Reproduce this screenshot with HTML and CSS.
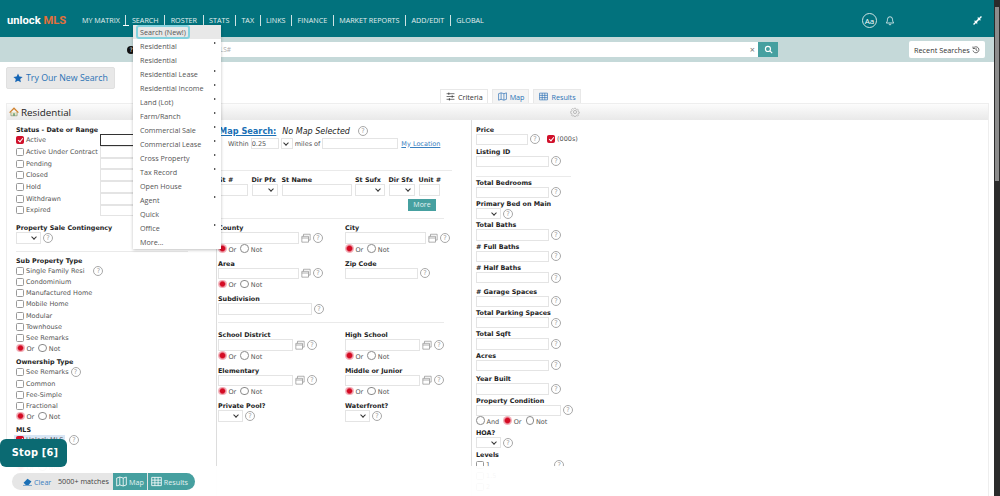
FILE: index.html
```html
<!DOCTYPE html>
<html>
    <head>
        <meta charset="UTF-8">
        <title>Search</title>
        <link rel="stylesheet" href="styles.css">
    </head>
    <body>
        <div class="mls-app">
            <div class="mls-main">
                <div class="mls-topbar">
                    <div class="mls-logo">unlock <span>MLS</span></div>
                    <ul class="mls-nav">
                        <li>MY MATRIX</li>
                        <li class="is-open">SEARCH</li>
                        <li>ROSTER</li>
                        <li>STATS</li>
                        <li>TAX</li>
                        <li>LINKS</li>
                        <li>FINANCE</li>
                        <li>MARKET REPORTS</li>
                        <li>ADD/EDIT</li>
                        <li>GLOBAL</li>
                    </ul>
                    <div class="mls-aa">Aa</div>
                    <svg class="mls-bell" viewBox="0 0 16 16"><path d="M8 2a4 4 0 0 0-4 4c0 4-1.500 5-2 6h12c-.5-1-2-2-2-6a4 4 0 0 0-4-4zM6.500 13.500a1.500 1.500 0 0 0 3 0" fill="none" stroke="#fff" stroke-width="1.200"/></svg>
                    <svg class="mls-compress" viewBox="0 0 16 16"><path d="M1 15L15 1" stroke="#fff" stroke-width="2.400"/><path d="M8.500 1.500v6h6zM7.500 14.500v-6h-6z" fill="#fff"/></svg>
                </div>
                <div class="mls-searchbar">
                    <div class="mls-qmark">?</div>
                    <div class="mls-searchbox">
                        <span>MLS#</span>
                        <b>×</b>
                    </div>
                    <div class="mls-searchbtn">
                        <svg viewBox="0 0 16 16"><circle cx="7" cy="7" r="4.500" fill="none" stroke="#fff" stroke-width="2"/><path d="M10.500 10.500L14.500 14.500" stroke="#fff" stroke-width="2"/></svg>
                    </div>
                    <div class="mls-recent">
                        Recent Searches
                        <svg viewBox="0 0 16 16"><path d="M3 4a6 6 0 1 1-1 5M2 1v4h4M8 4v4l3 2" fill="none" stroke="#444" stroke-width="1.500"/></svg>
                    </div>
                </div>

                <div class="mls-try">
                    <svg viewBox="0 0 16 16"><path d="M8 .8l2.200 4.800 5.200.6-3.900 3.500 1.100 5.200L8 12.300l-4.600 2.600 1.100-5.200L.6 6.200l5.200-.6z" fill="#1565b5"/></svg>
                    Try Our New Search
                </div>

                <div class="mls-tabs">
                    <div class="mls-tab is-active">
                        <svg viewBox="0 0 16 16"><path d="M1 3h14M1 8h14M1 13h14" stroke="#333" stroke-width="1.200"/><path d="M5 1v4M11 6v4M6 11v4" stroke="#333" stroke-width="1.500"/></svg>
                        Criteria
                    </div>
                    <div class="mls-tab">
                        <svg viewBox="0 0 16 16"><path d="M1 3l4.500-1.500 5 1.500L15 1.500V13l-4.500 1.500-5-1.500L1 14.500zM5.500 1.500V13M10.500 3v11.500" fill="none" stroke="#2a6fb5" stroke-width="1.200"/></svg>
                        Map
                    </div>
                    <div class="mls-tab">
                        <svg viewBox="0 0 16 16"><path d="M1 2h14v12H1zM1 6h14M1 10h14M5.700 2v12M10.300 2v12" fill="none" stroke="#2a6fb5" stroke-width="1.200"/></svg>
                        Results
                    </div>
                </div>

                <div class="mls-panel">
                    <div class="mls-panel-head">
                        <svg class="mls-house" viewBox="0 0 16 16"><path d="M3 8v6h10V8" fill="#e9e2c6" stroke="#7f8f6a"/><path d="M1 9l7-7 7 7" fill="none" stroke="#d0812c" stroke-width="2"/><path d="M7 10h2v4H7z" fill="#3c8a5c"/></svg>
                        <h3>Residential</h3>
                        <svg class="mls-gear" viewBox="0 0 16 16"><circle cx="8" cy="8" r="2.500" fill="none" stroke="#999"/><path d="M6.800 1h2.400l.4 2 1.500.7 1.800-1.100 1.600 1.700-1.100 1.700.6 1.500 2 .4v2.400l-2 .4-.6 1.500 1.100 1.700-1.600 1.700-1.800-1.100-1.500.7-.4 1.800H6.800l-.4-1.800-1.500-.7-1.800 1.100-1.600-1.700 1.100-1.700-.6-1.500-2-.4V6.900l2-.4.600-1.500-1.100-1.700 1.600-1.700 1.800 1.100 1.500-.7z" transform="translate(1.100 1.100) scale(.86)" fill="none" stroke="#999"/></svg>
                    </div>
                    <div class="mls-columns">
                        <div class="mls-col-left">
                            <div class="mls-label">Status - Date or Range</div>
                            <div class="mls-status"><label><input class="mls-cb" type="checkbox" checked>Active</label><input class="mls-input is-focus"></div>
                            <div class="mls-status"><label><input class="mls-cb" type="checkbox">Active Under Contract</label><input class="mls-input"></div>
                            <div class="mls-status"><label><input class="mls-cb" type="checkbox">Pending</label><input class="mls-input"></div>
                            <div class="mls-status"><label><input class="mls-cb" type="checkbox">Closed</label><input class="mls-input"></div>
                            <div class="mls-status"><label><input class="mls-cb" type="checkbox">Hold</label><input class="mls-input"></div>
                            <div class="mls-status"><label><input class="mls-cb" type="checkbox">Withdrawn</label><input class="mls-input"></div>
                            <div class="mls-status"><label><input class="mls-cb" type="checkbox">Expired</label><input class="mls-input"></div>

                            <div class="mls-label mls-contingency">Property Sale Contingency</div>
                            <div class="mls-row"><div class="mls-select"></div><span class="mls-help">?</span></div>
                            <hr class="mls-rule mls-rule-left">

                            <div class="mls-label">Sub Property Type</div>
                            <div class="mls-check"><input class="mls-cb" type="checkbox">Single Family Resi<span class="mls-help mls-help-far">?</span></div>
                            <div class="mls-check"><input class="mls-cb" type="checkbox">Condominium</div>
                            <div class="mls-check"><input class="mls-cb" type="checkbox">Manufactured Home</div>
                            <div class="mls-check"><input class="mls-cb" type="checkbox">Mobile Home</div>
                            <div class="mls-check"><input class="mls-cb" type="checkbox">Modular</div>
                            <div class="mls-check"><input class="mls-cb" type="checkbox">Townhouse</div>
                            <div class="mls-check"><input class="mls-cb" type="checkbox">See Remarks</div>
                            <div class="mls-radios"><input class="mls-radio" type="radio" name="r1" checked>Or<input class="mls-radio" type="radio" name="r1">Not</div>

                            <div class="mls-label mls-ownership">Ownership Type</div>
                            <div class="mls-check"><input class="mls-cb" type="checkbox">See Remarks<span class="mls-help">?</span></div>
                            <div class="mls-check"><input class="mls-cb" type="checkbox">Common</div>
                            <div class="mls-check"><input class="mls-cb" type="checkbox">Fee-Simple</div>
                            <div class="mls-check"><input class="mls-cb" type="checkbox">Fractional</div>
                            <div class="mls-radios"><input class="mls-radio" type="radio" name="r2" checked>Or<input class="mls-radio" type="radio" name="r2">Not</div>

                            <div class="mls-label mls-mls">MLS</div>
                            <div class="mls-check"><span class="mls-picked"><input class="mls-cb" type="checkbox" checked>Unlock MLS</span><span class="mls-help">?</span></div>
                            <div class="mls-radios mls-mls-or"><input class="mls-radio" type="radio" name="r3" checked>Or<input class="mls-radio" type="radio" name="r3">Not</div>
                        </div>

                        <div class="mls-col-mid">
                            <div class="mls-map-line">
                                <a href="#">Map Search:</a>
                                <em>No Map Selected</em>
                                <span class="mls-help">?</span>
                            </div>
                            <div class="mls-within">
                                Within
                                <input class="mls-input mls-w-radius" value="0.25">
                                <div class="mls-select mls-w-unit"></div>
                                miles of
                                <input class="mls-input mls-w-place">
                                <a href="#">My Location</a>
                            </div>
                            <hr class="mls-rule mls-rule-addr">

                            <div class="mls-address">
                                <div><div class="mls-label">St #</div><input class="mls-input mls-w-stno"></div>
                                <div><div class="mls-label">Dir Pfx</div><div class="mls-select mls-w-dir"></div></div>
                                <div><div class="mls-label">St Name</div><input class="mls-input mls-w-stname"></div>
                                <div><div class="mls-label">St Sufx</div><div class="mls-select mls-w-sufx"></div></div>
                                <div><div class="mls-label">Dir Sfx</div><div class="mls-select mls-w-dir"></div></div>
                                <div><div class="mls-label">Unit #</div><input class="mls-input mls-w-unitno"></div>
                            </div>
                            <div class="mls-more">More</div>
                            <hr class="mls-rule mls-rule-mid">

                            <div class="mls-pair">
                                <div>
                                    <div class="mls-label">County</div>
                                    <div class="mls-row"><input class="mls-input mls-w-81"><svg class="mls-stack" viewBox="0 0 12 12"><use href="#stack"/></svg><span class="mls-help">?</span></div>
                                    <div class="mls-radios"><input class="mls-radio" type="radio" name="r4" checked>Or<input class="mls-radio" type="radio" name="r4">Not</div>
                                </div>
                                <div>
                                    <div class="mls-label">City</div>
                                    <div class="mls-row"><input class="mls-input mls-w-81"><svg class="mls-stack" viewBox="0 0 12 12"><use href="#stack"/></svg><span class="mls-help">?</span></div>
                                    <div class="mls-radios"><input class="mls-radio" type="radio" name="r5" checked>Or<input class="mls-radio" type="radio" name="r5">Not</div>
                                </div>
                                <div>
                                    <div class="mls-label">Area</div>
                                    <div class="mls-row"><input class="mls-input mls-w-81"><svg class="mls-stack" viewBox="0 0 12 12"><use href="#stack"/></svg><span class="mls-help">?</span></div>
                                    <div class="mls-radios"><input class="mls-radio" type="radio" name="r6" checked>Or<input class="mls-radio" type="radio" name="r6">Not</div>
                                </div>
                                <div>
                                    <div class="mls-label">Zip Code</div>
                                    <div class="mls-row"><input class="mls-input mls-w-73"><span class="mls-help">?</span></div>
                                </div>
                                <div class="mls-span">
                                    <div class="mls-label">Subdivision</div>
                                    <div class="mls-row"><input class="mls-input mls-w-94"><span class="mls-help">?</span></div>
                                </div>
                            </div>
                            <hr class="mls-rule mls-rule-school">

                            <div class="mls-pair">
                                <div>
                                    <div class="mls-label">School District</div>
                                    <div class="mls-row"><input class="mls-input mls-w-75"><svg class="mls-stack" viewBox="0 0 12 12"><use href="#stack"/></svg><span class="mls-help">?</span></div>
                                    <div class="mls-radios"><input class="mls-radio" type="radio" name="r7" checked>Or<input class="mls-radio" type="radio" name="r7">Not</div>
                                </div>
                                <div>
                                    <div class="mls-label">High School</div>
                                    <div class="mls-row"><input class="mls-input mls-w-75"><svg class="mls-stack" viewBox="0 0 12 12"><use href="#stack"/></svg><span class="mls-help">?</span></div>
                                    <div class="mls-radios"><input class="mls-radio" type="radio" name="r8" checked>Or<input class="mls-radio" type="radio" name="r8">Not</div>
                                </div>
                                <div>
                                    <div class="mls-label">Elementary</div>
                                    <div class="mls-row"><input class="mls-input mls-w-75"><svg class="mls-stack" viewBox="0 0 12 12"><use href="#stack"/></svg><span class="mls-help">?</span></div>
                                    <div class="mls-radios"><input class="mls-radio" type="radio" name="r9" checked>Or<input class="mls-radio" type="radio" name="r9">Not</div>
                                </div>
                                <div>
                                    <div class="mls-label">Middle or Junior</div>
                                    <div class="mls-row"><input class="mls-input mls-w-75"><svg class="mls-stack" viewBox="0 0 12 12"><use href="#stack"/></svg><span class="mls-help">?</span></div>
                                    <div class="mls-radios"><input class="mls-radio" type="radio" name="r10" checked>Or<input class="mls-radio" type="radio" name="r10">Not</div>
                                </div>
                                <div>
                                    <div class="mls-label">Private Pool?</div>
                                    <div class="mls-row"><div class="mls-select"></div><span class="mls-help">?</span></div>
                                </div>
                                <div>
                                    <div class="mls-label">Waterfront?</div>
                                    <div class="mls-row"><div class="mls-select"></div><span class="mls-help">?</span></div>
                                </div>
                            </div>
                        </div>

                        <div class="mls-col-right">
                            <div class="mls-field is-first">
                                <div class="mls-label">Price</div>
                                <div class="mls-row"><input class="mls-input mls-w-52"><span class="mls-help">?</span><input class="mls-cb mls-thousands" type="checkbox" checked>(000s)</div>
                            </div>
                            <div class="mls-field is-near">
                                <div class="mls-label">Listing ID</div>
                                <div class="mls-row"><input class="mls-input mls-w-73"><span class="mls-help">?</span></div>
                            </div>
                            <hr class="mls-rule mls-rule-right">
                            <div class="mls-field is-first">
                                <div class="mls-label">Total Bedrooms</div>
                                <div class="mls-row"><input class="mls-input mls-w-73"><span class="mls-help">?</span></div>
                            </div>
                            <div class="mls-field">
                                <div class="mls-label">Primary Bed on Main</div>
                                <div class="mls-row"><div class="mls-select"></div><span class="mls-help">?</span></div>
                            </div>
                            <div class="mls-field">
                                <div class="mls-label">Total Baths</div>
                                <div class="mls-row"><input class="mls-input mls-w-73"><span class="mls-help">?</span></div>
                            </div>
                            <div class="mls-field">
                                <div class="mls-label"># Full Baths</div>
                                <div class="mls-row"><input class="mls-input mls-w-73"><span class="mls-help">?</span></div>
                            </div>
                            <div class="mls-field">
                                <div class="mls-label"># Half Baths</div>
                                <div class="mls-row"><input class="mls-input mls-w-73"><span class="mls-help">?</span></div>
                            </div>
                            <div class="mls-field is-spaced">
                                <div class="mls-label"># Garage Spaces</div>
                                <div class="mls-row"><input class="mls-input mls-w-73"><span class="mls-help">?</span></div>
                            </div>
                            <div class="mls-field">
                                <div class="mls-label">Total Parking Spaces</div>
                                <div class="mls-row"><input class="mls-input mls-w-73"><span class="mls-help">?</span></div>
                            </div>
                            <div class="mls-field">
                                <div class="mls-label">Total Sqft</div>
                                <div class="mls-row"><input class="mls-input mls-w-73"><span class="mls-help">?</span></div>
                            </div>
                            <div class="mls-field">
                                <div class="mls-label">Acres</div>
                                <div class="mls-row"><input class="mls-input mls-w-73"><span class="mls-help">?</span></div>
                            </div>
                            <div class="mls-field is-spaced">
                                <div class="mls-label">Year Built</div>
                                <div class="mls-row"><input class="mls-input mls-w-73"><span class="mls-help">?</span></div>
                            </div>
                            <div class="mls-field">
                                <div class="mls-label">Property Condition</div>
                                <div class="mls-row"><input class="mls-input mls-w-85"><span class="mls-help">?</span></div>
                                <div class="mls-radios"><input class="mls-radio" type="radio" name="r11">And<input class="mls-radio" type="radio" name="r11" checked>Or<input class="mls-radio" type="radio" name="r11">Not</div>
                            </div>
                            <div class="mls-field">
                                <div class="mls-label">HOA?</div>
                                <div class="mls-row"><div class="mls-select"></div><span class="mls-help">?</span></div>
                            </div>
                            <div class="mls-field is-near">
                                <div class="mls-label">Levels</div>
                                <div class="mls-check mls-levels"><input class="mls-cb" type="checkbox">1<span class="mls-help">?</span></div>
                                <div class="mls-check"><input class="mls-cb" type="checkbox">1.5</div>
                                <div class="mls-check"><input class="mls-cb" type="checkbox">2</div>
                            </div>
                        </div>
                    </div>
                </div>
            </div>
            <div class="mls-scrollbar"><div></div></div>

            <ul class="mls-menu">
                <li class="is-current"><span>Search (New!)</span></li>
                <li class="has-sub">Residential</li>
                <li>Residential</li>
                <li class="has-sub">Residential Lease</li>
                <li class="has-sub">Residential Income</li>
                <li class="has-sub">Land (Lot)</li>
                <li class="has-sub">Farm/Ranch</li>
                <li class="has-sub">Commercial Sale</li>
                <li class="has-sub">Commercial Lease</li>
                <li class="has-sub">Cross Property</li>
                <li class="has-sub">Tax Record</li>
                <li>Open House</li>
                <li class="has-sub">Agent</li>
                <li>Quick</li>
                <li class="has-sub">Office</li>
                <li>More...</li>
            </ul>

            <div class="mls-fade"></div>
            <div class="mls-stop">Stop [6]</div>
            <div class="mls-matchbar">
                <div class="mls-clear">
                    <svg viewBox="0 0 16 16"><path d="M1 10l7-7 7 5-5 6H5z" fill="#1a6fb5"/><path d="M0 15h16" stroke="#1a6fb5"/></svg>
                    Clear
                </div>
                <div class="mls-count">5000+ matches</div>
                <div class="mls-match-btn">
                    <svg viewBox="0 0 16 16"><path d="M1 3l4.500-1.500 5 1.500L15 1.500V13l-4.500 1.500-5-1.500L1 14.500zM5.500 1.500V13M10.500 3v11.500" fill="none" stroke="#fff" stroke-width="1.200"/></svg>
                    Map
                </div>
                <div class="mls-match-btn">
                    <svg viewBox="0 0 16 16"><path d="M1 2h14v12H1zM1 6h14M1 10h14M5.700 2v12M10.300 2v12" fill="none" stroke="#fff" stroke-width="1.200"/></svg>
                    Results
                </div>
            </div>

            <svg class="mls-defs" width="0" height="0">
                <symbol id="stack" viewBox="0 0 12 12">
                    <path d="M1 4h8v7H1zM1 6h8M3 4V1.500h8v7H9" fill="none" stroke="#8a8a8a" stroke-width=".8"/>
                </symbol>
            </svg>
        </div>
    </body>
</html>
```

FILE: styles.css
```css
* {
    padding: 0;
    margin: 0;
    box-sizing: border-box;
}

html, body {
    height: 100%;
    width: 100%;
    overflow: hidden;
    background-color: #fff;
}

.mls-app {
    position: relative;
    display: flex;
    height: 496px;
    width: 1000px;
    overflow: hidden;
    font-family: "DejaVu Sans", Verdana, sans-serif;
    font-size: 6.5px;
    color: #555;
}

.mls-main {
    width: 994px;
    height: 496px;
    overflow: hidden;
}

.mls-scrollbar {
    width: 6px;
    padding: 7px 1px 0 1px;
    background-color: #2b2b2b;
}

.mls-scrollbar div {
    height: 174px;
    background-color: #8c8c8c;
}

.mls-defs {
    position: absolute;
}

/* top bar */
.mls-topbar {
    display: flex;
    align-items: center;
    height: 37px;
    padding: 3px 0 0 7px;
    background-color: #02727d;
    color: #fff;
}

.mls-logo {
    width: 75px;
    font-family: Roboto, sans-serif;
    font-size: 11.200px;
    font-weight: 700;
    white-space: nowrap;
}

.mls-logo span {
    color: #e2703a;
}

.mls-nav {
    display: flex;
    list-style: none;
    font-family: "Open Sans", sans-serif;
    font-size: 7.200px;
    color: #e2efef;
}

.mls-nav li {
    position: relative;
    height: 11px;
    line-height: 11px;
    padding: 0 5.500px;
    border-left: 1px solid #cfe3e3;
}

.mls-nav li:first-child {
    border-left: 0;
    padding-left: 0;
}

.mls-nav li.is-open::after {
    content: "";
    position: absolute;
    left: -3px;
    top: 10px;
    width: 6px;
    height: 1px;
    background-color: #fff;
}

.mls-aa {
    width: 15px;
    height: 15px;
    margin-left: auto;
    border: 1px solid #cfe3e3;
    border-radius: 8px;
    font-family: "Open Sans", sans-serif;
    font-size: 8px;
    line-height: 13px;
    text-align: center;
}

.mls-bell {
    width: 10px;
    height: 11px;
    margin-left: 8px;
}

.mls-compress {
    width: 9px;
    height: 9px;
    margin: 0 12px 0 78px;
}

/* search bar */
.mls-searchbar {
    display: flex;
    align-items: center;
    height: 25px;
    padding-left: 127px;
    background-color: #c5d9d9;
}

.mls-qmark {
    width: 8px;
    height: 8px;
    border-radius: 50%;
    background-color: #111;
    color: #fff;
    font-size: 6px;
    line-height: 8px;
    text-align: center;
}

.mls-searchbox {
    display: flex;
    justify-content: space-between;
    align-items: center;
    width: 623px;
    height: 15px;
    padding: 0 3px 0 79px;
    background-color: #fff;
    color: #aaa;
    font-family: "Open Sans", sans-serif;
    font-size: 6.500px;
}

.mls-searchbox b {
    font-size: 9px;
    font-weight: 400;
    color: #777;
}

.mls-searchbtn {
    display: flex;
    align-items: center;
    justify-content: center;
    width: 20px;
    height: 15px;
    background-color: #46a0a0;
}

.mls-searchbtn svg {
    width: 9px;
    height: 9px;
}

.mls-recent {
    display: flex;
    align-items: center;
    gap: 2px;
    width: 76px;
    height: 17px;
    margin-left: 131px;
    padding-left: 5px;
    border-radius: 2px;
    background-color: #fff;
    color: #333;
    font-family: "Open Sans", sans-serif;
    font-size: 7.300px;
    white-space: nowrap;
}

.mls-recent svg {
    width: 8px;
    height: 8px;
}

/* try button + tabs */
.mls-try {
    display: flex;
    align-items: center;
    gap: 3px;
    width: 109px;
    height: 22px;
    margin: 5px 0 0 6px;
    padding-left: 6px;
    border: 1px solid #e0e0e0;
    border-radius: 2px;
    background-color: #e8e8e8;
    color: #2a72b5;
    font-family: "Open Sans", sans-serif;
    font-size: 8.800px;
    white-space: nowrap;
}

.mls-try svg {
    width: 10px;
    height: 10px;
}

.mls-tabs {
    display: flex;
    gap: 4px;
    height: 14px;
    padding-left: 440px;
}

.mls-tab {
    display: flex;
    align-items: center;
    gap: 3px;
    height: 14px;
    padding: 0 4px 0 5px;
    border: 1px solid #e8e8e8;
    border-bottom: 0;
    color: #2a72b5;
    font-family: "Open Sans", sans-serif;
    font-size: 7.200px;
    background-color: #f4f4f4;
}

.mls-tab.is-active {
    color: #333;
    background-color: #fff;
}

.mls-tab svg {
    width: 9px;
    height: 9px;
}

/* panel */
.mls-panel {
    width: 983px;
    margin-left: 6px;
    border: 1px solid #eee;
    border-bottom: 0;
}

.mls-panel-head {
    position: relative;
    display: flex;
    align-items: center;
    gap: 2px;
    height: 16px;
    padding-left: 2px;
    background: linear-gradient(#fcfcfc, #e9e9e9);
}

.mls-panel-head h3 {
    font-family: "Open Sans", sans-serif;
    font-size: 9.800px;
    font-weight: 400;
    color: #222;
}

.mls-house {
    width: 10px;
    height: 10px;
}

.mls-gear {
    width: 10px;
    height: 10px;
    margin-left: 497px;
}

.mls-columns {
    display: grid;
    grid-template-columns: 210px 255px 1fr;
    height: 376px;
}

.mls-label {
    height: 8px;
    line-height: 8px;
    font-weight: 700;
    font-size: 6.400px;
    color: #222;
    white-space: nowrap;
}

.mls-input {
    display: block;
    height: 11.500px;
    border: 1px solid #e4e4e4;
    background-color: #fff;
    font-family: "DejaVu Sans", Verdana, sans-serif;
    font-size: 6.500px;
    color: #555;
    outline: 0;
}

.mls-select {
    position: relative;
    flex: none;
    width: 25px;
    height: 11.500px;
    border: 1px solid #e4e4e4;
}

.mls-select::after {
    content: "";
    position: absolute;
    right: 4px;
    top: 2px;
    width: 3px;
    height: 3px;
    border-right: 1px solid #333;
    border-bottom: 1px solid #333;
    transform: rotate(45deg);
}

.mls-row {
    display: flex;
    align-items: center;
    height: 11.500px;
    white-space: nowrap;
}

.mls-help {
    flex: none;
    width: 10px;
    height: 10px;
    margin-left: 2px;
    border: 1px solid #a8a8a8;
    border-radius: 50%;
    color: #a0a0a0;
    font-size: 6.500px;
    font-weight: 400;
    line-height: 8px;
    text-align: center;
}

.mls-stack {
    flex: none;
    width: 10px;
    height: 10px;
    margin-left: 2px;
}

.mls-cb {
    appearance: none;
    position: relative;
    flex: none;
    width: 8px;
    height: 8px;
    margin-right: 2px;
    border: 1px solid #999;
    border-radius: 1.500px;
    background-color: #fff;
}

.mls-cb:checked {
    border-color: #d0102a;
    background-color: #d0102a;
}

.mls-cb:checked::after {
    content: "";
    position: absolute;
    left: 2px;
    top: 0;
    width: 2px;
    height: 4px;
    border-right: 1px solid #fff;
    border-bottom: 1px solid #fff;
    transform: rotate(40deg);
}

.mls-radio {
    appearance: none;
    flex: none;
    width: 8.500px;
    height: 8.500px;
    margin: 0 1px 2px 0;
    border: 1px solid #8a8a8a;
    border-radius: 50%;
    background-color: #fff;
}

.mls-radio:checked {
    border: 0;
    background: radial-gradient(circle, #d40b24 34%, #f0a8b2 56%, #fbe3e6 100%);
}

.mls-radios {
    display: flex;
    align-items: center;
    gap: 1px;
    height: 11px;
    white-space: nowrap;
}

.mls-radios .mls-radio:not(:first-child) {
    margin-left: 3px;
}

.mls-rule {
    height: 1px;
    border: 0;
    background-color: #eaeaea;
}

/* left column */
.mls-col-left {
    padding: 5.500px 0 0 9px;
    border-right: 1px solid #ddd;
}

.mls-col-left .mls-label {
    margin-bottom: .900px;
}

.mls-col-left .mls-contingency {
    margin-top: 8px;
    margin-bottom: 0;
}

.mls-status {
    display: flex;
    align-items: center;
    height: 11.700px;
}

.mls-status label {
    display: flex;
    align-items: center;
    width: 84px;
    white-space: nowrap;
}

.mls-status .mls-input {
    width: 50px;
    height: 11.700px;
}

.mls-status .is-focus {
    border: 1px solid #333;
}

.mls-rule-left {
    width: 172px;
    margin: 7.500px 0 4.500px;
}

.mls-check {
    display: flex;
    align-items: center;
    height: 11.100px;
    white-space: nowrap;
}

.mls-help-far {
    margin-left: 9px;
}

.mls-col-left .mls-ownership {
    margin-top: 3.800px;
}

.mls-col-left .mls-mls {
    margin-top: 3.400px;
}

.mls-picked {
    display: flex;
    align-items: center;
    width: 51px;
    height: 11px;
    margin-left: -2px;
    padding-left: 2px;
    background-color: #d8e6f5;
}

.mls-picked + .mls-help {
    margin-left: 4px;
}

.mls-mls-or {
    margin-top: 17px;
}

/* middle column */
.mls-col-mid {
    padding: 5px 0 0 1px;
    border-right: 1px solid #ddd;
}

.mls-map-line {
    display: flex;
    align-items: center;
    gap: 6px;
    height: 12px;
    padding-left: 1px;
}

.mls-map-line a {
    color: #1a6fb5;
    font-size: 8.200px;
    font-weight: 700;
}

.mls-map-line em {
    color: #222;
    font-size: 8px;
}

.mls-within {
    display: flex;
    align-items: center;
    height: 11px;
    margin-top: 1px;
    padding-left: 10px;
    gap: 2px;
    white-space: nowrap;
}

.mls-within .mls-input {
    height: 11px;
}

.mls-within .mls-select {
    height: 11px;
}

.mls-within a {
    margin-left: 1px;
    color: #3a80c0;
}

.mls-w-radius {
    width: 28px;
}

.mls-w-unit {
    width: 12px;
}

.mls-w-place {
    width: 76px;
}

.mls-rule-addr {
    width: 234px;
    margin: 21px 0 5px;
}

.mls-address {
    display: flex;
    gap: 3.500px;
}

.mls-w-stno {
    width: 30px;
}

.mls-w-dir {
    width: 26.500px;
}

.mls-w-stname {
    width: 70px;
}

.mls-w-sufx {
    width: 30px;
}

.mls-w-unitno {
    width: 21px;
}

.mls-more {
    width: 28px;
    height: 12.500px;
    margin: 3px 0 0 190px;
    background-color: #46a0a0;
    color: #e4f2f2;
    font-family: "Open Sans", sans-serif;
    font-size: 7px;
    line-height: 12.500px;
    text-align: center;
}

.mls-rule-mid {
    width: 226px;
    margin: 7px 0 5px;
}

.mls-pair {
    display: grid;
    grid-template-columns: 127px 1fr;
    row-gap: 4.500px;
}

.mls-pair .mls-radios {
    margin-top: .500px;
}

.mls-rule-school {
    width: 226px;
    margin: 7px 0 8.500px;
}

.mls-w-52 {
    width: 52px;
}

.mls-w-73 {
    width: 73px;
}

.mls-w-75 {
    width: 75px;
}

.mls-w-81 {
    width: 81px;
}

.mls-w-85 {
    width: 85px;
}

.mls-w-94 {
    width: 94px;
}

/* right column */
.mls-col-right {
    padding: 5.500px 0 0 4px;
}

.mls-field {
    margin-top: 1.800px;
}

.mls-field.is-first {
    margin-top: 0;
}

.mls-field.is-near {
    margin-top: 2.500px;
}

.mls-field.is-spaced {
    margin-top: 4.300px;
}

.mls-thousands {
    margin-left: 7px;
    margin-right: 2px;
}

.mls-rule-right {
    width: 95px;
    margin: 9px 0 1.700px;
}

.mls-levels .mls-help {
    margin-left: 64px;
}

/* dropdown */
.mls-menu {
    position: absolute;
    left: 133px;
    top: 25px;
    width: 88px;
    height: 224px;
    list-style: none;
    background-color: #fff;
    box-shadow: 0 1px 3px rgba(0, 0, 0, .25);
    font-family: "Open Sans", sans-serif;
    font-size: 7.200px;
    color: #555;
}

.mls-menu li {
    position: relative;
    height: 14px;
    line-height: 14px;
    padding-left: 7px;
    white-space: nowrap;
}

.mls-menu li.has-sub::after {
    content: "";
    position: absolute;
    right: 5px;
    top: 3px;
    border-left: 2.500px solid #222;
    border-top: 1.500px solid transparent;
    border-bottom: 1.500px solid transparent;
}

.mls-menu li.is-current {
    height: 14px;
    background-color: #e8e8e8;
}

.mls-menu li.is-current span {
    position: absolute;
    left: 3px;
    top: 0;
    height: 14px;
    padding: 0 2px;
    line-height: 10px;
    border: 2px solid #84d2de;
    border-radius: 3px;
}

/* overlays at the bottom */
.mls-fade {
    position: absolute;
    left: 0;
    bottom: 0;
    width: 988px;
    height: 30px;
    background-color: rgba(255, 255, 255, .95);
}

.mls-stop {
    position: absolute;
    left: 0;
    top: 439px;
    width: 67px;
    height: 28px;
    padding-left: 3px;
    border-radius: 6px;
    background-color: #0b6a72;
    color: #fff;
    font-size: 9.800px;
    font-weight: 700;
    letter-spacing: .2px;
    line-height: 28px;
    text-align: center;
}

.mls-matchbar {
    position: absolute;
    left: 12px;
    top: 473px;
    display: flex;
    width: 183px;
    height: 17px;
    border-radius: 9px;
    overflow: hidden;
    background-color: #e6e6e6;
    font-family: "Open Sans", sans-serif;
    font-size: 7.200px;
}

.mls-clear {
    display: flex;
    align-items: center;
    gap: 2px;
    width: 46px;
    padding-left: 11px;
    color: #3a80c0;
}

.mls-clear svg {
    width: 9px;
    height: 9px;
}

.mls-count {
    width: 55px;
    line-height: 17px;
    color: #444;
    white-space: nowrap;
}

.mls-match-btn {
    display: flex;
    align-items: center;
    gap: 2px;
    padding: 0 3px;
    border-right: 1px solid #e6e6e6;
    background-color: #46a0a0;
    color: #e4f2f2;
}

.mls-match-btn:last-child {
    flex: 1;
    border-right: 0;
}

.mls-match-btn svg {
    width: 11px;
    height: 11px;
}
```
